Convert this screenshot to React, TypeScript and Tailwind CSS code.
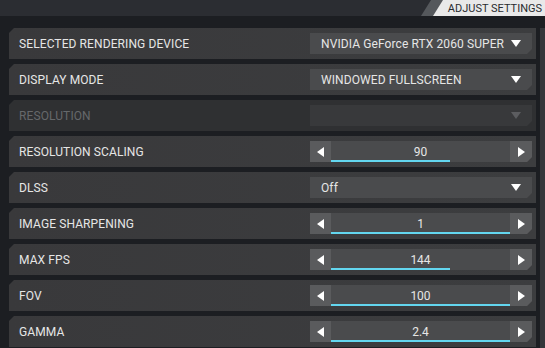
import type { ReactNode } from 'react'

type Setting =
  | { label: string; kind: 'select'; value: string; disabled?: boolean }
  | { label: string; kind: 'slider'; value: string; fill: number }

const SETTINGS: Setting[] = [
  { label: 'SELECTED RENDERING DEVICE', kind: 'select', value: 'NVIDIA GeForce RTX 2060 SUPER' },
  { label: 'DISPLAY MODE', kind: 'select', value: 'WINDOWED FULLSCREEN' },
  { label: 'RESOLUTION', kind: 'select', value: '', disabled: true },
  { label: 'RESOLUTION SCALING', kind: 'slider', value: '90', fill: 66.5 },
  { label: 'DLSS', kind: 'select', value: 'Off' },
  { label: 'IMAGE SHARPENING', kind: 'slider', value: '1', fill: 100 },
  { label: 'MAX FPS', kind: 'slider', value: '144', fill: 66.5 },
  { label: 'FOV', kind: 'slider', value: '100', fill: 100 },
  { label: 'GAMMA', kind: 'slider', value: '2.4', fill: 100 },
]

function Triangle({ dir, className }: { dir: 'down' | 'left' | 'right'; className?: string }) {
  const pts = dir === 'down' ? '0,0 10,0 5,7' : dir === 'left' ? '7,0 7,10 0,5' : '0,0 0,10 7,5'
  const box = dir === 'down' ? '0 0 10 7' : '0 0 7 10'
  return (
    <svg viewBox={box} className={className} fill="currentColor">
      <polygon points={pts} />
    </svg>
  )
}

function Control({ children, dim }: { children: ReactNode; dim?: boolean }) {
  return (
    <div
      className={`ml-auto flex h-[21px] w-[222px] items-stretch [clip-path:polygon(0_0,100%_0,100%_calc(100%-5px),calc(100%-5px)_100%,0_100%)] ${
        dim ? 'bg-[#38393b]' : 'bg-[#4a4b4d]'
      }`}
    >
      {children}
    </div>
  )
}

function Row({ setting }: { setting: Setting }) {
  const disabled = setting.kind === 'select' && setting.disabled
  return (
    <div
      className={`flex h-[31px] shrink-0 items-center pl-[10px] pr-[4px] [clip-path:polygon(5px_0,100%_0,100%_100%,0_100%,0_5px)] ${
        disabled ? 'bg-[#2f3032]' : 'bg-gradient-to-r from-[#39393b] to-[#3c3d3f]'
      }`}
    >
      <span className={`text-[12px] tracking-[0.1px] ${disabled ? 'text-[#66686b]' : 'text-[#e6e6e6]'}`}>
        {setting.label}
      </span>

      {setting.kind === 'select' ? (
        <Control dim={disabled}>
          <span className="flex flex-1 items-center pl-[11px] text-[12px] tracking-[0.1px] text-[#e6e6e6]">
            {setting.value}
          </span>
          <span className="flex items-center pr-[11px]">
            <Triangle dir="down" className={`h-[7px] w-[10px] ${disabled ? 'text-[#5c5d60]' : 'text-white'}`} />
          </span>
        </Control>
      ) : (
        <Control>
          <span className="flex w-[21px] items-center justify-center bg-[#5a5b5d]">
            <Triangle dir="left" className="h-[10px] w-[7px] text-white" />
          </span>
          <span className="relative flex flex-1 items-center justify-center text-[12px] text-[#e6e6e6]">
            {setting.value}
            <span
              className="absolute bottom-0 left-0 h-[2px] bg-[#63d6ef]"
              style={{ width: `${setting.fill}%` }}
            />
          </span>
          <span className="flex w-[22px] items-center justify-center bg-[#5a5b5d]">
            <Triangle dir="right" className="h-[10px] w-[7px] text-white" />
          </span>
        </Control>
      )}
    </div>
  )
}

export default function App() {
  return (
    <div className="flex h-[348px] w-[545px] flex-col overflow-hidden bg-[#1c1e22] font-['Roboto','Liberation_Sans',sans-serif]">
      {/* Top bar */}
      <div className="flex h-[16px] shrink-0 bg-[#2b2d32]">
        <div className="flex-1" />
        <div className="flex w-[124px] bg-[#55585c] pl-[12px] [clip-path:polygon(10px_0,100%_0,100%_100%,0_100%)]">
          <div className="flex flex-1 items-center justify-end bg-[#e9e9e9] pr-[3px] text-[11px] leading-none text-[#2a2c30] [clip-path:polygon(10px_0,100%_0,100%_100%,0_100%)]">
            ADJUST SETTINGS
          </div>
        </div>
      </div>

      {/* Settings list */}
      <div className="flex flex-1 pt-[12px]">
        <div className="flex w-[536px] flex-col gap-[5px] pl-[9px]">
          {SETTINGS.map((s) => (
            <Row key={s.label} setting={s} />
          ))}
        </div>
        <div className="ml-[4px] w-[5px] bg-[#34363a]" />
      </div>
    </div>
  )
}
